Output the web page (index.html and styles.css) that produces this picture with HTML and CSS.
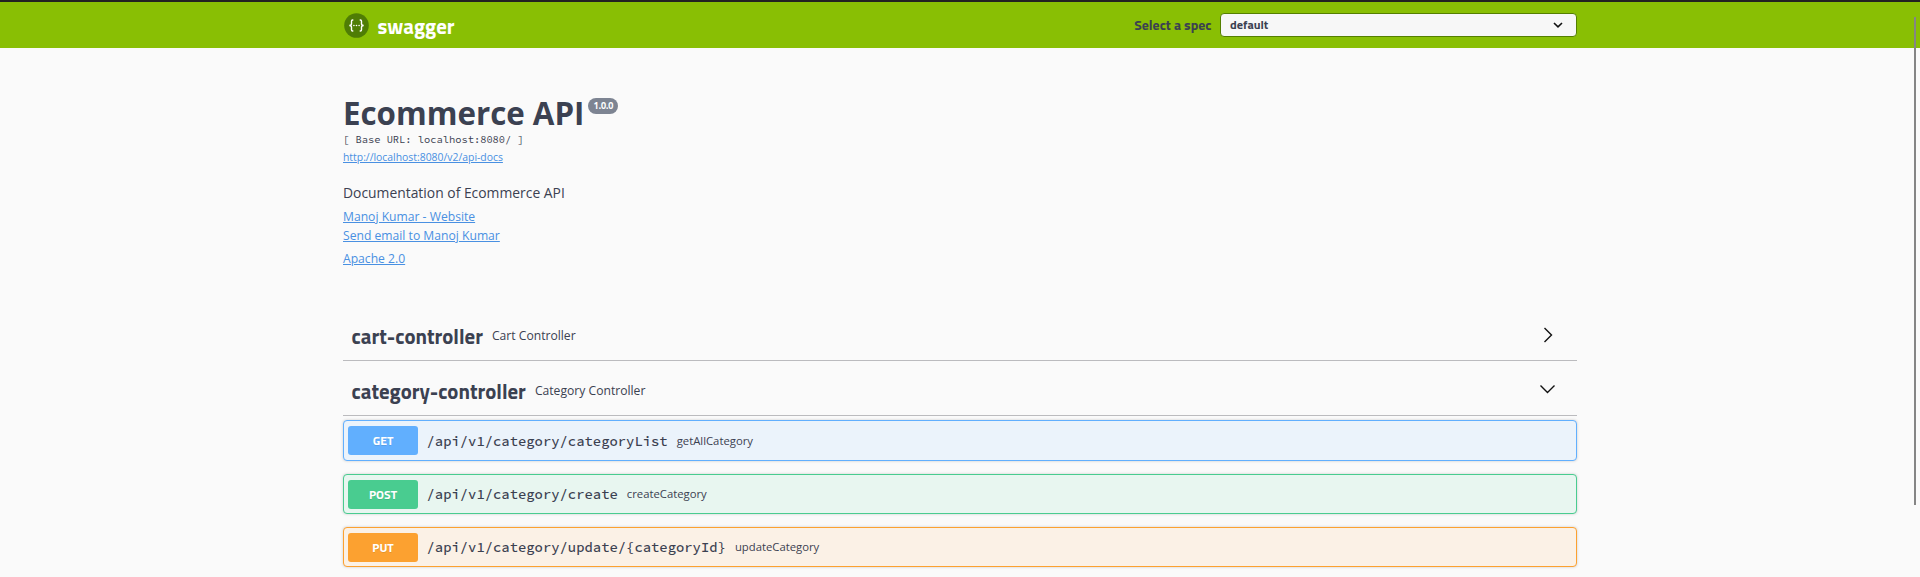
FILE: index.html
```html
<!DOCTYPE html>
<html lang="en">
<head>
<meta charset="utf-8">
<title>Swagger UI</title>
<link rel="stylesheet" href="styles.css">
</head>
<body>
<header class="topbar">
  <div class="wrapper topbar-row">
    <a class="brand">
      <svg class="brand-icon" viewBox="0 0 25 25"><circle cx="12.5" cy="12.5" r="12.3" fill="#4f7d05"/><g fill="none" stroke="#fff" stroke-width="1.4"><path d="M9.3 7H8.6Q7.5 7 7.5 8.3V10.7Q7.5 12.5 5.3 12.5Q7.5 12.5 7.5 14.3V16.7Q7.5 18 8.6 18H9.3M15.7 7H16.4Q17.5 7 17.5 8.3V10.7Q17.5 12.5 19.7 12.5Q17.5 12.5 17.5 14.3V16.7Q17.5 18 16.4 18H15.7"/></g><g fill="#fff"><circle cx="9.9" cy="12.5" r=".8"/><circle cx="12.5" cy="12.5" r=".8"/><circle cx="15.1" cy="12.5" r=".8"/></g></svg>
      <span class="brand-name">swagger</span>
    </a>
    <label class="spec"><span class="spec-label">Select a spec</span>
      <span class="select"><span class="select-value">default</span>
        <svg class="select-arrow" viewBox="0 0 10 6"><path d="M1 1L5 4.8L9 1" fill="none" stroke="#111" stroke-width="1.6"/></svg>
      </span>
    </label>
  </div>
</header>
<main class="wrapper">
  <section class="info">
    <h1 class="title">Ecommerce API<span class="version">1.0.0</span></h1>
    <div class="base-url">[ Base URL: localhost:8080/ ]</div>
    <div class="docs"><a class="link">http://localhost:8080/v2/api-docs</a></div>
    <div class="description">Documentation of Ecommerce API</div>
    <div class="contact"><a class="link">Manoj Kumar - Website</a></div>
    <div class="contact"><a class="link">Send email to Manoj Kumar</a></div>
    <div class="contact license"><a class="link">Apache 2.0</a></div>
  </section>
  <section class="tag">
    <h2 class="tag-name">cart-controller</h2><small class="tag-desc">Cart Controller</small>
    <svg class="chevron" viewBox="0 0 18 18"><path d="M5.5 1L12.5 8L5.5 15" fill="none" stroke="#111" stroke-width="1.4"/></svg>
  </section>
  <section class="tag">
    <h2 class="tag-name">category-controller</h2><small class="tag-desc">Category Controller</small>
    <svg class="chevron" viewBox="0 0 18 18"><path d="M1.5 3.5L8.5 10.5L15.5 3.5" fill="none" stroke="#111" stroke-width="1.4"/></svg>
  </section>
  <div class="operations">
    <div class="op get"><span class="method">GET</span><span class="path">/api/v1/category/categoryList</span><span class="summary">getAllCategory</span></div>
    <div class="op post"><span class="method">POST</span><span class="path">/api/v1/category/create</span><span class="summary">createCategory</span></div>
    <div class="op put"><span class="method">PUT</span><span class="path">/api/v1/category/update/{categoryId}</span><span class="summary">updateCategory</span></div>
  </div>
</main>
<div class="scroll-thumb"></div>
</body>
</html>
```
FILE: styles.css
```css
* { box-sizing: border-box; }
body { margin: 0; height: 577px; overflow: hidden; background: #fafafa; color: #3b4151; font-family: "Open Sans", sans-serif; }
.wrapper { width: 1234px; margin-left: 343px; }
.topbar { height: 48px; border-top: 2px solid #222; background: #89bf04; }
.topbar-row { display: flex; justify-content: space-between; height: 46px; }
.brand { display: flex; align-items: center; gap: 8.5px; padding: 0 0 0 1px; }
.brand-icon { width: 25px; height: 25px; margin-top: 1px; }
.brand-name { padding-top: 2px; color: #fff; font: bold 20.8px/26px "Titillium Web", Roboto, sans-serif; }
.spec { display: flex; align-items: center; gap: 8.5px; }
.spec-label { font: bold 13.9px/20px "Titillium Web", Roboto, sans-serif; }
.select { display: flex; align-items: center; justify-content: space-between; width: 357px; height: 24px; padding: 0 13px 0 9px; border: 1px solid #547f00; border-radius: 4px; background: #f7f7f7; }
.select-value { font: bold 12.3px/18px "Titillium Web", Roboto, sans-serif; }
.select-arrow { width: 10px; height: 6px; }
.info { height: 258px; padding-top: 44px; }
.title { display: flex; gap: 4px; height: 42px; margin: 0; font-size: 31.3px; line-height: 42px; }
.version { display: flex; align-items: center; justify-content: center; width: 30px; height: 16px; margin-top: 6px; border-radius: 8px; background: #7d8492; color: #fff; font: bold 9px/16px "Titillium Web", Roboto, sans-serif; }
.base-url { height: 16px; font: 400 10.4px/12px "Source Code Pro", "DejaVu Sans Mono", monospace; }
.docs { height: 32px; font-size: 10.4px; line-height: 15px; }
.link { color: #4990e2; text-decoration: underline; }
.description { height: 26px; font-size: 13.88px; line-height: 22px; }
.contact { height: 19px; font-size: 12.15px; line-height: 17px; }
.license { margin-top: 4px; }
.tag { display: flex; align-items: center; height: 55px; padding: 5px 20px 0 8.5px; border-bottom: 1px solid #bbbbbe; }
.tag-name { margin: 0; font: bold 20.8px/28px "Titillium Web", Roboto, sans-serif; }
.tag-desc { margin-left: 9px; font-size: 12.15px; line-height: 18px; }
.chevron { width: 18px; height: 18px; margin-left: auto; }
.operations { display: grid; grid-template-rows: 41px 40px 40px; gap: 13px; padding-top: 4px; }
.op { display: flex; align-items: center; padding-left: 4px; border: 1px solid; border-radius: 4px; box-shadow: 0 0 3px rgba(0,0,0,.19); }
.get { border-color: #61affe; background: #ebf3fb; }
.post { border-color: #49cc90; background: #e8f6f0; }
.put { border-color: #fca130; background: #fbf1e6; }
.method { width: 70px; height: 29px; border-radius: 3px; color: #fff; font: bold 12.2px/29px "Titillium Web", Roboto, sans-serif; text-align: center; text-shadow: 0 1px 0 rgba(0,0,0,.1); }
.get .method { background: #61affe; }
.post .method { background: #49cc90; }
.put .method { background: #fca130; }
.path { margin-left: 8.5px; font: 500 13.87px/20px "Source Code Pro", "DejaVu Sans Mono", monospace; }
.summary { margin-left: 9px; font-size: 11.3px; line-height: 18px; }
.scroll-thumb { position: absolute; left: 1914px; top: 17px; width: 2px; height: 488px; background: #858585; }
```
